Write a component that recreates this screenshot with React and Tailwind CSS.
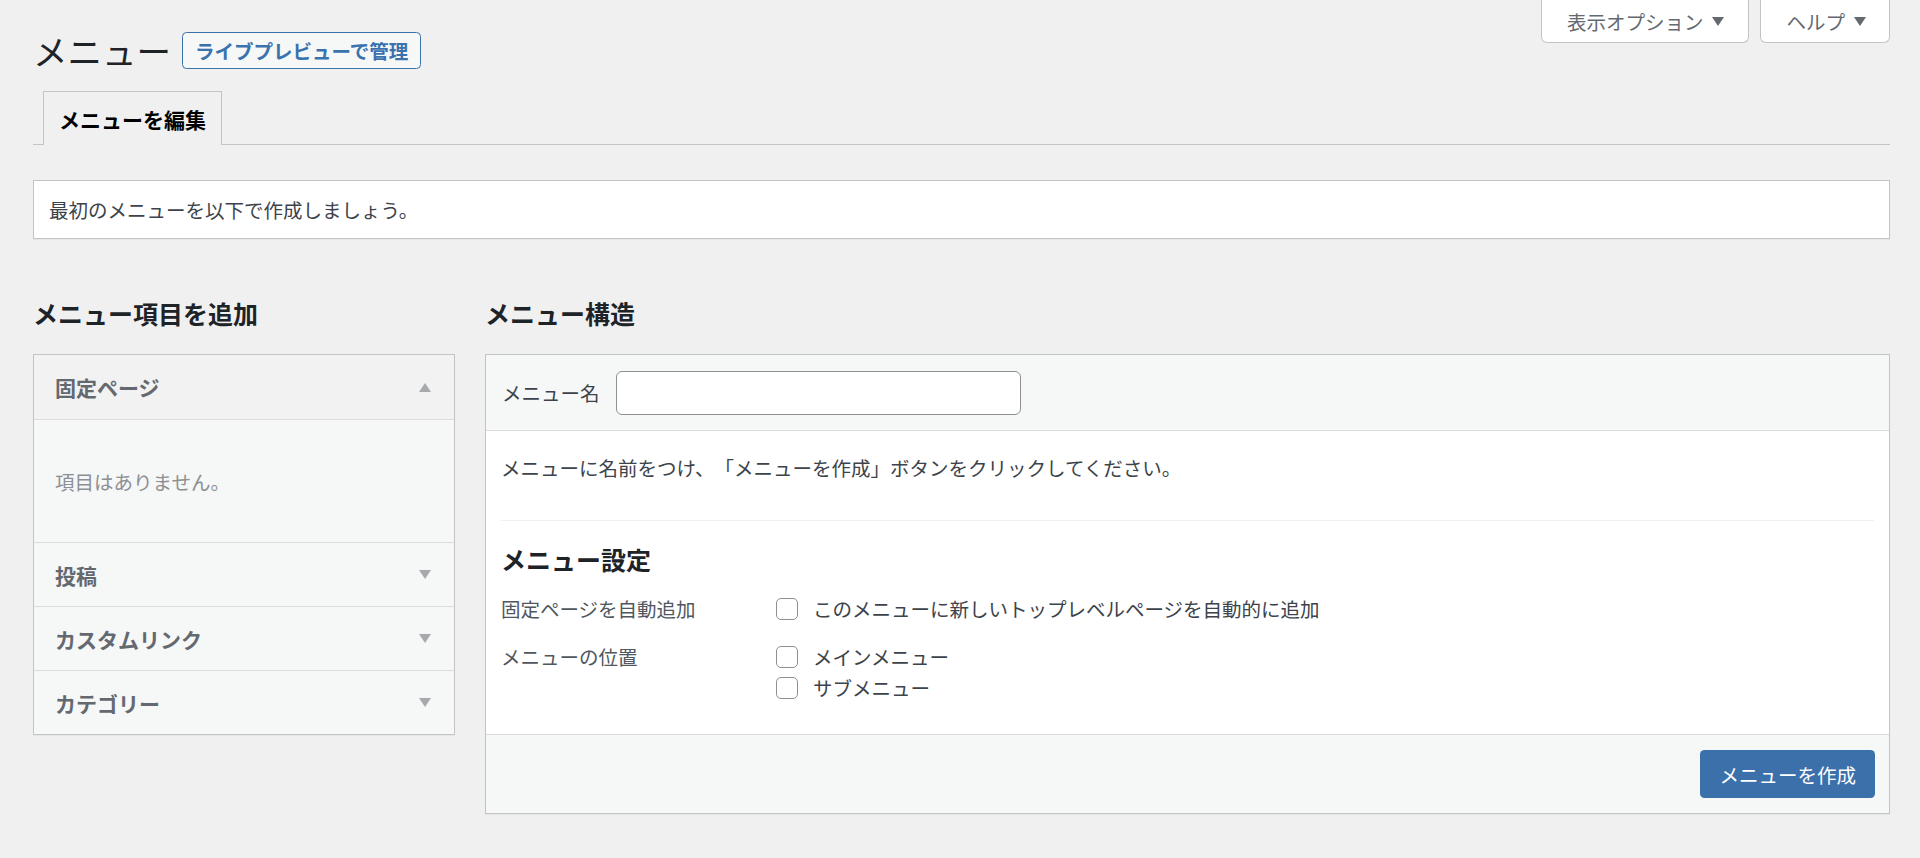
import React from "react";

function Tri({ up = false, className = "" }) {
  return (
    <svg width="12" height="9" viewBox="0 0 12 9" className={className}>
      {up ? (
        <polygon points="0,9 12,9 6,0" fill="currentColor" />
      ) : (
        <polygon points="0,0 12,0 6,9" fill="currentColor" />
      )}
    </svg>
  );
}

function MetaButton({ label, wide }) {
  return (
    <button
      className={`h-[43px] bg-white border border-t-0 border-[#c3c4c7] rounded-b-[6px] flex items-center pl-[25px] ${wide ? "pr-[15px]" : "pr-[14px]"} text-[19.5px] text-[#646970]`}
    >
      <span className="leading-[27px]">{label}</span>
      <span className="w-[30px] flex items-center justify-center text-[#646970]">
        <Tri />
      </span>
    </button>
  );
}

function AccRow({ label, first = false }) {
  return (
    <div
      className={`h-[64px] flex items-center justify-between pl-[21px] pr-[23px] ${first ? "bg-[#f2f2f2]" : "bg-[#f6f7f7] border-t border-[#dcdcde]"}`}
    >
      <span className="text-[21px] font-bold text-[#646970] leading-[28px]">{label}</span>
      <span className="text-[#a7aaad] flex">
        <Tri up={first} />
      </span>
    </div>
  );
}

function Check({ label }) {
  return (
    <label className="h-[31px] flex items-center">
      <span className="w-[22px] h-[22px] bg-white border border-[#8c8f94] rounded-[5px] shrink-0" />
      <span className="ml-[15px] text-[19.5px] leading-[27px] text-[#3c434a]">{label}</span>
    </label>
  );
}

export default function App() {
  return (
    <div
      className="min-h-[858px] bg-[#f0f0f1] text-[#3c434a] text-[19.5px] [text-spacing-trim:space-all]"
      style={{ fontFamily: '"Noto Sans CJK JP", "Noto Sans", sans-serif' }}
    >
      <div className="pl-[33px] pr-[30px] pb-[40px]">
        {/* Top row */}
        <div className="flex items-start justify-between">
          <div className="pt-[28px] flex items-center">
            <h1 className="text-[34.5px] leading-[44px] font-normal text-[#1d2327]">メニュー</h1>
            <a className="ml-[11px] h-[37px] px-[12px] flex items-center border border-[#3a72ae] rounded-[4.5px] bg-[#f6f7f7] text-[#3a72ae] text-[19.5px] font-bold leading-[27px]">
              ライブプレビューで管理
            </a>
          </div>
          <div className="flex gap-[11px]">
            <MetaButton label="表示オプション" wide />
            <MetaButton label="ヘルプ" />
          </div>
        </div>

        {/* Tabs */}
        <div className="mt-[19px] border-b border-[#c3c4c7] flex pl-[10px]">
          <div className="h-[54px] -mb-px px-[15px] flex items-center border border-b-0 border-[#c3c4c7] bg-[#f0f0f1] text-[21px] font-bold text-black leading-[36px]">
            メニューを編集
          </div>
        </div>

        {/* Notice */}
        <div className="mt-[35px] bg-white border border-[#c3c4c7] px-[15px] py-[15px] shadow-[0_1px_1px_rgba(0,0,0,0.04)]">
          <p className="leading-[27px]">最初のメニューを以下で作成しましょう。</p>
        </div>

        {/* Columns */}
        <div className="mt-[57px] flex gap-[30px] items-start">
          {/* Left */}
          <div className="w-[422px] shrink-0">
            <h2 className="h-[34px] leading-[34px] text-[25px] font-bold text-[#1d2327]">メニュー項目を追加</h2>
            <div className="mt-[24px] border border-[#c3c4c7] shadow-[0_1px_1px_rgba(0,0,0,0.04)]">
              <AccRow label="固定ページ" first />
              <div className="h-[123px] bg-[#f6f7f7] border-t border-[#dcdcde] flex items-center pl-[21px]">
                <span className="text-[19.5px] text-[#8c8f94] leading-[27px]">項目はありません。</span>
              </div>
              <AccRow label="投稿" />
              <AccRow label="カスタムリンク" />
              <AccRow label="カテゴリー" />
            </div>
          </div>

          {/* Right */}
          <div className="flex-1 min-w-0">
            <h2 className="h-[34px] leading-[34px] text-[25px] font-bold text-[#1d2327]">メニュー構造</h2>
            <div className="mt-[24px] border border-[#c3c4c7] shadow-[0_1px_1px_rgba(0,0,0,0.04)]">
              <div className="h-[76px] bg-[#f6f7f7] border-b border-[#dcdcde] flex items-center pl-[16px]">
                <span className="leading-[27px]">メニュー名</span>
                <div className="ml-[16px] w-[405px] h-[44px] bg-white border border-[#8c8f94] rounded-[6px]" />
              </div>
              <div className="bg-white px-[15px] pt-[23px] pb-[31px]">
                <p className="leading-[27px]">メニューに名前をつけ、「メニューを作成」ボタンをクリックしてください。</p>
                <div className="mt-[39px] border-t border-[#f0f0f1]" />
                <h3 className="mt-[21px] h-[34px] leading-[34px] text-[25px] font-bold text-[#1d2327]">メニュー設定</h3>
                <div className="mt-[17px] flex">
                  <div className="w-[275px] shrink-0 h-[31px] flex items-center text-[#50575e]">固定ページを自動追加</div>
                  <div>
                    <Check label="このメニューに新しいトップレベルページを自動的に追加" />
                  </div>
                </div>
                <div className="mt-[17px] flex">
                  <div className="w-[275px] shrink-0 h-[31px] flex items-center text-[#50575e]">メニューの位置</div>
                  <div className="flex flex-col">
                    <Check label="メインメニュー" />
                    <Check label="サブメニュー" />
                  </div>
                </div>
              </div>
              <div className="bg-[#f6f7f7] border-t border-[#dcdcde] py-[15px] pr-[14px] flex justify-end">
                <button className="h-[48px] px-[19px] rounded-[4.5px] bg-[#3b70aa] text-white text-[19.5px] leading-[27px]">
                  メニューを作成
                </button>
              </div>
            </div>
          </div>
        </div>
      </div>
    </div>
  );
}
